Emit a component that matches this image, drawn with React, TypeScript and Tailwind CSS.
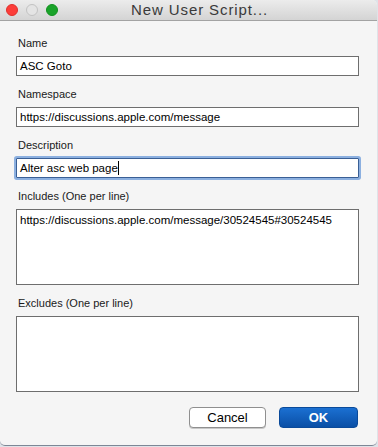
import React from 'react';

const Field = ({ label, children }: { label: string; children: React.ReactNode }) => (
  <div className="flex flex-col">
    <div className="h-[14px] mb-[6px] pl-[2px] text-[11px] leading-[14px] text-[#1a1a1a]">{label}</div>
    {children}
  </div>
);

const App = () => {
  return (
    <div
      className="w-[378px] h-[447px] bg-[#dfe3e8] overflow-hidden"
      style={{ fontFamily: '"Liberation Sans", Arial, sans-serif' }}
    >
      <div className="w-[377px] h-[446px] bg-[#f5f5f5] rounded-b-[5px] rounded-tr-[5px] flex flex-col border-b border-[#7d8796]">
        {/* title bar */}
        <div className="h-[21px] shrink-0 flex items-center border-b border-[#a3a3a3] bg-gradient-to-b from-[#ececec] to-[#d4d4d4] rounded-tr-[5px]">
          <div className="flex items-center gap-[8px] pl-[6px]">
            <span className="w-[12px] h-[12px] rounded-full bg-[#fc3d39] border border-[#e0302c]" />
            <span className="w-[12px] h-[12px] rounded-full bg-[#e4e4e4] border border-[#c2c2c2]" />
            <span className="w-[12px] h-[12px] rounded-full bg-[#1aa32a] border border-[#12921f]" />
          </div>
          <div className="ml-[73px] text-[15px] tracking-[0.9px] text-[#3a3a3a]">New User Script...</div>
        </div>

        {/* form */}
        <div className="flex flex-col gap-[11px] pt-[15px] pl-[16px] w-[359px]">
          <Field label="Name">
            <div className="h-[20px] bg-white border border-[#6e6e6e] px-[3px] text-[11.5px] leading-[18px] text-black">ASC Goto</div>
          </Field>
          <Field label="Namespace">
            <div className="h-[20px] bg-white border border-[#6e6e6e] px-[3px] text-[11.5px] leading-[18px] text-black">
              https://discussions.apple.com/message
            </div>
          </Field>
          <Field label="Description">
            <div className="h-[20px] bg-white border border-[#3a5f95] shadow-[0_0_0_2px_#8cb0e0] rounded-[1px] px-[3px] text-[11.5px] leading-[18px] text-black flex items-center">
              <span>Alter asc web page</span>
              <span className="w-px h-[14px] bg-black" />
            </div>
          </Field>
          <Field label="Includes (One per line)">
            <div className="h-[76px] bg-white border border-[#6e6e6e] px-[3px] pt-[3px] text-[11.5px] leading-[14px] text-black">
              https://discussions.apple.com/message/30524545#30524545
            </div>
          </Field>
          <Field label="Excludes (One per line)">
            <div className="h-[76px] bg-white border border-[#6e6e6e]" />
          </Field>
        </div>

        {/* buttons */}
        <div className="flex justify-end gap-[13px] pt-[15px] pr-[19px]">
          <button className="w-[77px] h-[21px] rounded-[4px] bg-white border border-[#8f8f8f] shadow-[0_1px_0_#c8c8c8] text-[13px] text-black leading-[19px]">
            Cancel
          </button>
          <button className="w-[79px] h-[21px] rounded-[4px] bg-gradient-to-b from-[#1b70d2] to-[#0a4fa6] border border-[#0a4a9a] text-[13px] font-bold text-white leading-[19px]">
            OK
          </button>
        </div>
      </div>
    </div>
  );
};

export default App;
